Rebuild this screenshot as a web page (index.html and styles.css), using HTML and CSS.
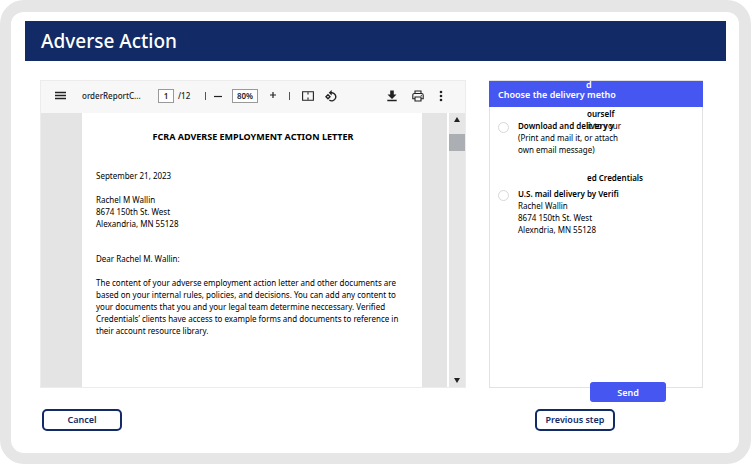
FILE: index.html
```
<!DOCTYPE html>
<html lang="en">
<head>
  <meta charset="UTF-8">
  <meta name="viewport" content="width=device-width, initial-scale=1.0">
  <title>Adverse Action</title>
  <link rel="stylesheet" href="styles.css">
</head>
<body>

<div class="tablet">
  <header class="page-header">
    <h1>Adverse Action</h1>
  </header>

  <main class="content">
    <section class="viewer">
      <div class="toolbar">
        <button type="button" class="icon-btn menu-btn" aria-label="Menu">
          <svg width="11" height="9" viewBox="0 0 11 9"><path d="M0 1.500h11M0 4.500h11M0 7.500h11" stroke="#222" stroke-width="1.300"/></svg>
        </button>
        <span class="file-name">orderReportC...</span>
        <input type="text" class="page-input" value="1" aria-label="Page">
        <span class="page-total">/12</span>
        <span class="divider"></span>
        <button type="button" class="icon-btn zoom-out" aria-label="Zoom out">
          <svg width="8" height="8" viewBox="0 0 8 8"><path d="M0 4.500h8" stroke="#222" stroke-width="1.200"/></svg>
        </button>
        <input type="text" class="zoom-input" value="80%" aria-label="Zoom">
        <button type="button" class="icon-btn zoom-in" aria-label="Zoom in">
          <svg width="6" height="8" viewBox="0 0 6 8"><path d="M0 3h6M3 0v6" stroke="#222" stroke-width="1.200"/></svg>
        </button>
        <span class="divider"></span>
        <button type="button" class="icon-btn fit-btn" aria-label="Fit to page">
          <svg width="12" height="10" viewBox="0 0 12 10"><path d="M.6.8h10.800v8.400H.6z" fill="none" stroke="#222" stroke-width="1.100"/><path d="M6 1.200v2.200M6 6.600v2.200" stroke="#222" stroke-width="1.100"/></svg>
        </button>
        <button type="button" class="icon-btn rotate-btn" aria-label="Rotate">
          <svg width="12" height="12" viewBox="0 0 12 12"><path d="M5.200 2.700H7a4.100 4.100 0 1 1-2.600 7.500" fill="none" stroke="#222" stroke-width="1.400"/><path d="M6.700 0v5.400L3.700 2.700z" fill="#222"/><path d="M3 4.800 5 6.800 3 8.800 1 6.800z" fill="none" stroke="#222" stroke-width="1.400"/></svg>
        </button>
        <div class="toolbar-end">
          <button type="button" class="icon-btn" aria-label="Download">
            <svg width="10" height="12" viewBox="0 0 10 12"><path d="M3.200.5h3.600v4h2.700L5 9 .5 4.500h2.700zM.3 9.800h9.400v1.500H.3z" fill="#222"/></svg>
          </button>
          <button type="button" class="icon-btn" aria-label="Print">
            <svg width="12" height="12" viewBox="0 0 12 12"><g fill="none" stroke="#222" stroke-width="1.100"><path d="M3 3.500V1h6v2.500M3 8.700H.8V5.200c0-1 .6-1.700 1.600-1.700h7.200c1 0 1.600.7 1.600 1.700v3.500H9"/><path d="M3 7h6v4H3z"/></g><circle cx="9.300" cy="5.300" r=".6" fill="#222"/></svg>
          </button>
          <button type="button" class="icon-btn" aria-label="More">
            <svg width="4" height="12" viewBox="0 0 4 12"><g fill="#222"><circle cx="2" cy="2" r="1.300"/><circle cx="2" cy="6" r="1.300"/><circle cx="2" cy="10" r="1.300"/></g></svg>
          </button>
        </div>
      </div>

      <div class="document">
        <article class="letter">
          <h2>FCRA ADVERSE EMPLOYMENT ACTION LETTER</h2>
          <p>September 21, 2023</p>
          <p>Rachel M Wallin<br>8674 150th St. West<br>Alexandria, MN 55128</p>
          <p class="greeting">Dear Rachel M. Wallin:</p>
          <p>The content of your adverse employment action letter and other documents are<br>
            based on your internal rules, policies, and decisions. You can add any content to<br>
            your documents that you and your legal team determine neccessary. Verified<br>
            Credentials’ clients have access to example forms and documents to reference in<br>
            their account resource library.</p>
        </article>
        <div class="scrollbar">
          <svg width="6" height="5" viewBox="0 0 6 5"><path d="M3 0l3 5H0z" fill="#222"/></svg>
          <div class="thumb"></div>
          <svg width="6" height="5" viewBox="0 0 6 5"><path d="M3 5l3-5H0z" fill="#222"/></svg>
        </div>
      </div>
    </section>

    <form class="delivery">
      <h2>Choose the delivery metho<span class="wrapped wrapped-title">d</span></h2>
      <div class="option">
        <input type="radio" name="delivery" id="download">
        <label for="download">
          <strong>Download and delivery y<span class="wrapped wrapped-self">ourself</span></strong>
          <span class="option-text">(Print and mail it, or attach<span class="wrapped wrapped-your">it to your</span><br>own email message)</span>
        </label>
      </div>
      <div class="option">
        <input type="radio" name="delivery" id="mail">
        <label for="mail">
          <strong>U.S. mail delivery by Verifi<span class="wrapped wrapped-name">ed Credentials</span></strong>
          <span class="option-text">Rachel Wallin<br>8674 150th St. West<br>Alexndria, MN 55128</span>
        </label>
      </div>
      <button type="submit" class="btn-send">Send</button>
    </form>
  </main>

  <footer class="actions">
    <button type="button" class="btn-outline">Cancel</button>
    <button type="button" class="btn-outline">Previous step</button>
  </footer>
</div>

</body>
</html>
```
FILE: styles.css
```
* {
  box-sizing: border-box;
}

body {
  margin: 0;
  background: #fff;
  color: #000;
  font-family: "Noto Sans", "Open Sans", sans-serif;
  font-size: 8px;
  line-height: 12px;
}

h1,
h2,
p {
  margin: 0;
}

button,
input {
  font-family: inherit;
  margin: 0;
}

/* Tablet frame around the page */
.tablet {
  margin-right: 1px;
  padding-bottom: 22px;
  border: 12px solid #e6e6e6;
  border-left-width: 11px;
  border-bottom-width: 11px;
  border-radius: 24px;
}

.page-header {
  margin: 9px 13px 19px 14px;
  padding: 0 16px;
  background: #122a66;
  color: #fff;
}

.page-header h1 {
  font-size: 19px;
  font-weight: 500;
  line-height: 40px;
}

.content {
  display: grid;
  grid-template-columns: 426fr 214fr;
  gap: 23px;
  padding: 0 36px 0 29px;
}

/* Document viewer */
.viewer {
  border: 1px solid #ececec;
}

.toolbar {
  display: flex;
  align-items: center;
  height: 32px;
  padding: 0 22px 3px 14px;
  background: #f7f7f7;
  color: #222;
  font-weight: 500;
}

.icon-btn {
  display: flex;
  padding: 0;
  border: none;
  background: none;
  cursor: pointer;
}

.file-name {
  width: 76px;
  margin-left: 16px;
}

.page-input,
.zoom-input {
  height: 14px;
  padding: 0;
  border: 1px solid #999;
  background: #fff;
  color: #222;
  font-size: 8px;
  font-weight: 600;
  text-align: center;
}

.page-input {
  width: 16px;
}

.zoom-input {
  width: 26px;
  margin-left: 10px;
}

.page-total {
  width: 27px;
  margin-left: 4px;
}

.divider {
  width: 1px;
  height: 8px;
  background: #555;
}

.zoom-out {
  margin-left: 8px;
}

.zoom-in {
  margin: 0 13px 0 12px;
}

.fit-btn {
  margin: 0 11px 0 12px;
}

.toolbar-end {
  display: flex;
  align-items: center;
  gap: 15px;
  margin-left: auto;
}

.document {
  display: grid;
  grid-template-columns: 1fr 16px;
  gap: 2px;
}

.letter {
  padding: 18px 16px 38px 14px;
  border-left: 41px solid #e4e4e4;
  border-right: 25px solid #e4e4e4;
  background: #fff;
}

.letter h2 {
  margin-bottom: 27px;
  padding-left: 4px;
  font-size: 9px;
  font-weight: 700;
  line-height: 12px;
  text-align: center;
}

.letter p {
  margin-bottom: 12px;
  white-space: nowrap;
}

.letter .greeting {
  margin-top: 23px;
}

.scrollbar {
  display: flex;
  flex-direction: column;
  align-items: center;
  padding: 4px 0;
  background: #e6e6e6;
}

.thumb {
  width: 16px;
  height: 17px;
  margin: 12px 0 auto;
  background: #abafb4;
}

/* Delivery options */
.delivery {
  position: relative;
  border: 1px solid #e2e2e2;
}

.delivery h2 {
  position: relative;
  margin: 0 -1px 13px;
  padding: 8px 9px 6px;
  background: #4656f0;
  color: #fff;
  font-size: 9px;
  font-weight: 600;
  line-height: 12px;
}

.option {
  position: relative;
  display: flex;
  gap: 9px;
  margin-bottom: 32px;
  padding-left: 8px;
}

.option input {
  appearance: none;
  flex: none;
  width: 11px;
  height: 11px;
  margin-top: 2px;
  border: 1px solid #d8d8d8;
  border-radius: 50%;
  background: #fff;
}

.option strong {
  display: block;
  font-weight: 600;
}

.option-text {
  display: block;
}

/* Words that spill out of the narrow column */
.wrapped {
  position: absolute;
  left: 97px;
}

.wrapped-title {
  top: -2px;
}

.wrapped-self {
  top: -12px;
}

.wrapped-your {
  top: 0;
}

.wrapped-name {
  top: -16px;
}

.btn-send {
  position: absolute;
  right: 36px;
  bottom: -15px;
  width: 76px;
  height: 20px;
  padding: 0;
  border: none;
  border-radius: 3px;
  background: #4656f0;
  color: #fff;
  font-size: 9px;
  font-weight: 600;
  cursor: pointer;
}

.actions {
  display: flex;
  justify-content: space-between;
  margin-top: 21px;
  padding: 0 124px 0 31px;
}

.btn-outline {
  width: 80px;
  height: 22px;
  padding: 0 0 1px;
  border: 2px solid #122a66;
  border-radius: 5px;
  background: #fff;
  color: #122a66;
  font-size: 9px;
  font-weight: 600;
  cursor: pointer;
}
```
